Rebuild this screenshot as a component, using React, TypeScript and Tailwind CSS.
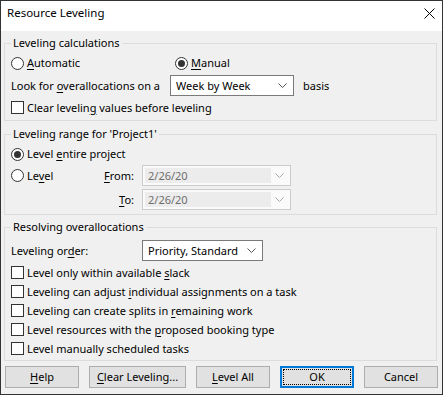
import type { ReactNode } from 'react'

const font = "font-['Noto_Sans',_'Liberation_Sans',_sans-serif] text-[11px] leading-[16px] text-black"

function U({ children }: { children: ReactNode }) {
  return <span className="underline underline-offset-[2px] decoration-1">{children}</span>
}

function Radio({ checked }: { checked?: boolean }) {
  return (
    <span className="flex size-[13px] shrink-0 items-center justify-center rounded-full border border-[#333] bg-white">
      {checked && <span className="size-[7px] rounded-full bg-[#333]" />}
    </span>
  )
}

function Check() {
  return <span className="size-[13px] shrink-0 border border-[#333] bg-white" />
}

function Chevron({ color }: { color: string }) {
  return (
    <svg width="9" height="5" viewBox="0 0 9 5" className="shrink-0">
      <polyline points="0.5,0.5 4.5,4.5 8.5,0.5" fill="none" stroke={color} strokeWidth="1" />
    </svg>
  )
}

function Select({ value, width }: { value: string; width: string }) {
  return (
    <div className={`flex h-[21px] ${width} items-center justify-between border border-[#7a7a7a] bg-white pl-[5px] pr-[6px]`}>
      <span>{value}</span>
      <Chevron color="#555" />
    </div>
  )
}

function DisabledCombo({ value }: { value: string }) {
  return (
    <div className="flex h-[21px] w-[149px] items-center border border-[#cccccc] bg-[#fafafa] p-[2px]">
      <div className="flex h-full w-[126px] items-center bg-[#ececec] pl-[3px] text-[#6d6d6d]">{value}</div>
      <div className="flex flex-1 justify-center">
        <Chevron color="#aaa" />
      </div>
    </div>
  )
}

function Group({ title, className, children }: { title: string; className: string; children: ReactNode }) {
  return (
    <fieldset className={`ml-[3px] w-[433px] border border-[#dcdcdc] pl-[6px] ${className}`}>
      <legend className="px-[2px] leading-[16px]">{title}</legend>
      {children}
    </fieldset>
  )
}

function CheckRow({ children }: { children: ReactNode }) {
  return (
    <div className="flex h-[19px] items-center gap-[3px]">
      <Check />
      <span>{children}</span>
    </div>
  )
}

function Button({ children, width = 'w-[74px]', focused }: { children: ReactNode; width?: string; focused?: boolean }) {
  return focused ? (
    <div className={`flex h-[22px] ${width} border-2 border-[#0078d7] bg-[#e1e1e1] p-[1px]`}>
      <div className="flex flex-1 items-center justify-center border border-dotted border-black">{children}</div>
    </div>
  ) : (
    <div className={`flex h-[22px] ${width} items-center justify-center border border-[#adadad] bg-[#e1e1e1]`}>
      {children}
    </div>
  )
}

export default function App() {
  return (
    <div className={`flex h-[395px] w-[443px] flex-col border border-[#333] bg-[#f0f0f0] ${font}`}>
      <div className="flex h-[30px] shrink-0 items-start justify-between bg-white pl-[6px] pr-[7px] pt-[4px]">
        <span className="text-[11.5px]">Resource Leveling</span>
        <svg width="11" height="11" viewBox="0 0 11 11" className="mt-[3px]">
          <path d="M0.5 0.5 L10.5 10.5 M10.5 0.5 L0.5 10.5" stroke="#000" strokeWidth="1" />
        </svg>
      </div>

      <Group title="Leveling calculations" className="mt-[4px] pb-[3px]">
        <div className="mt-[3px] flex h-[18px] items-center">
          <div className="flex w-[164px] items-center gap-[3px]">
            <Radio />
            <span>
              <U>A</U>utomatic
            </span>
          </div>
          <div className="flex items-center gap-[3px]">
            <Radio checked />
            <span>
              <U>M</U>anual
            </span>
          </div>
        </div>
        <div className="mt-[3px] flex h-[21px] items-center">
          <span className="w-[159px]">
            Look for <U>o</U>verallocations on a
          </span>
          <Select value="Week by Week" width="w-[124px]" />
          <span className="ml-[9px]">basis</span>
        </div>
        <div className="mt-[2px]">
          <CheckRow>
            Clear levelin<U>g</U> values before leveling
          </CheckRow>
        </div>
      </Group>

      <Group title="Leveling range for 'Project1'" className="mt-[5px] pb-[4px]">
        <div className="mt-[3px] flex h-[18px] items-center gap-[3px]">
          <Radio checked />
          <span>
            Level <U>e</U>ntire project
          </span>
        </div>
        <div className="mt-[2px] flex h-[21px] items-center">
          <div className="flex w-[91px] items-center gap-[3px]">
            <Radio />
            <span>
              Le<U>v</U>el
            </span>
          </div>
          <span className="w-[32px] text-right">
            <U>F</U>rom:
          </span>
          <div className="ml-[8px]">
            <DisabledCombo value="2/26/20" />
          </div>
        </div>
        <div className="mt-[3px] flex h-[21px] items-center pl-[91px]">
          <span className="w-[32px] text-right">
            <U>T</U>o:
          </span>
          <div className="ml-[8px]">
            <DisabledCombo value="2/26/20" />
          </div>
        </div>
      </Group>

      <Group title="Resolving overallocations" className="mt-[4px] pb-[2px]">
        <div className="mt-[5px] flex h-[21px] items-center">
          <span className="w-[131px]">
            Leveling or<U>d</U>er:
          </span>
          <Select value="Priority, Standard" width="w-[121px]" />
        </div>
        <div className="mt-[2px] flex flex-col">
          <CheckRow>
            Level only within available <U>s</U>lack
          </CheckRow>
          <CheckRow>
            Leveling can adjust <U>i</U>ndividual assignments on a task
          </CheckRow>
          <CheckRow>
            Leveling can create splits in <U>r</U>emaining work
          </CheckRow>
          <CheckRow>
            Level resources with the <U>p</U>roposed booking type
          </CheckRow>
          <CheckRow>Level manually scheduled tasks</CheckRow>
        </div>
      </Group>

      <div className="ml-[4px] mt-[5px] flex gap-[10px]">
        <Button>
          <U>H</U>elp
        </Button>
        <Button width="w-[97px]">
          <U>C</U>lear Leveling...
        </Button>
        <Button>
          <U>L</U>evel All
        </Button>
        <Button focused>OK</Button>
        <Button>Cancel</Button>
      </div>
    </div>
  )
}
